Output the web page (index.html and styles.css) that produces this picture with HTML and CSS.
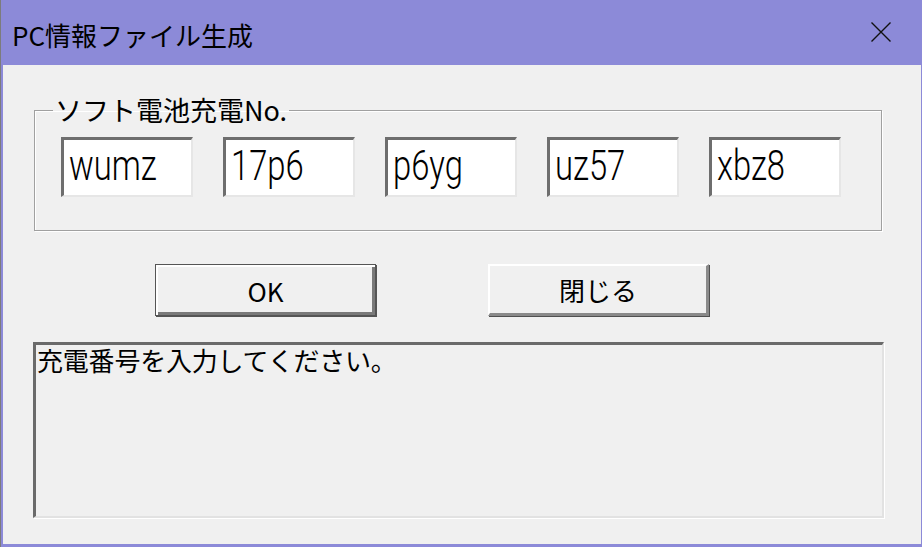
FILE: index.html
```html
<!DOCTYPE html>
<html lang="ja">
<head>
    <meta charset="UTF-8">
    <title>PC情報ファイル生成</title>
    <link rel="stylesheet" href="styles.css">
</head>
<body>
    <div class="window">
        <!-- Title bar -->
        <div class="titlebar">
            <span class="title">PC情報ファイル生成</span>
            <span class="close">
                <svg width="20" height="20" viewBox="0 0 20 20">
                    <path d="M0.5 0.5 L19.5 19.5 M19.5 0.5 L0.5 19.5" stroke="#111" stroke-width="1.4" fill="none"/>
                </svg>
            </span>
        </div>

        <!-- Dialog body -->
        <div class="client">
            <fieldset class="group">
                <legend>ソフト電池充電No.</legend>
                <div class="codes">
                    <div class="code"><span>wumz</span></div>
                    <div class="code"><span>17p6</span></div>
                    <div class="code"><span>p6yg</span></div>
                    <div class="code"><span>uz57</span></div>
                    <div class="code"><span>xbz8</span></div>
                </div>
            </fieldset>

            <div class="actions">
                <div class="btn btn-default">OK</div>
                <div class="btn">閉じる</div>
            </div>

            <div class="message">充電番号を入力してください。</div>
        </div>
    </div>
</body>
</html>
```

FILE: styles.css
```css
* {
    margin: 0;
    padding: 0;
    box-sizing: border-box;
}

body {
    background: #7c7c7c;
    font-family: "Noto Sans CJK JP", sans-serif;
    color: #000;
    height: 547px;
    overflow: hidden;
    padding-left: 1px;
}

.window {
    width: 921px;
    height: 547px;
    background: #f0f0f0;
    border-left: 2px solid #8c8ad8;
    border-right: 1px solid #8c8ad8;
    border-bottom: 3px solid #8c8ad8;
    display: flex;
    flex-direction: column;
}

/* Title bar */
.titlebar {
    height: 65px;
    flex-shrink: 0;
    background: #8c8ad8;
    display: flex;
    align-items: center;
    justify-content: space-between;
    padding: 0 30px 0 9px;
}

.title {
    font-size: 26px;
    line-height: 30px;
    margin-top: 4px;
}

.close {
    display: flex;
    width: 20px;
    height: 20px;
    margin-top: -1px;
}

/* Client area */
.client {
    flex: 1;
    padding: 30px 0 0 31px;
}

.group {
    width: 848px;
    border: 1px solid #a0a0a0;
    box-shadow: inset 1px 1px 0 #fff, 1px 1px 0 #fff;
    padding: 12px 0 33px 26px;
}

.group legend {
    font-size: 27px;
    line-height: 30px;
    margin-left: -8px;
    padding: 0 2px;
}

.codes {
    display: flex;
    gap: 30px;
}

.code {
    width: 132px;
    height: 60px;
    background: #fff;
    border-top: 3px solid #6e6e6e;
    border-left: 3px solid #6e6e6e;
    border-right: 2px solid #e6e6e6;
    border-bottom: 2px solid #e6e6e6;
    font-family: Roboto, "Liberation Sans", sans-serif;
    font-weight: 300;
    font-size: 42px;
    line-height: 52px;
    padding-left: 5px;
    overflow: hidden;
}

/* narrow, tall glyphs like the dialog's bitmap font */
.code span {
    display: inline-block;
    transform: scaleX(0.78);
    transform-origin: left center;
}

/* Buttons */
.actions {
    display: flex;
    gap: 112px;
    margin: 33px 0 0 121px;
}

.btn {
    width: 221px;
    height: 52px;
    display: flex;
    align-items: center;
    justify-content: center;
    font-size: 26px;
    background: #f0f0f0;
    border-top: 2px solid #fff;
    border-left: 2px solid #fff;
    border-right: 3px solid #8a8a8a;
    border-bottom: 3px solid #8a8a8a;
    box-shadow: 1px 1px 0 #505050;
}

.btn-default {
    border: 1px solid #555;
    box-shadow: inset 2px 2px 0 #fff, inset -3px -3px 0 #7a7a7a, 1px 1px 0 #555;
}

/* Message box */
.message {
    width: 851px;
    height: 176px;
    margin: 26px 0 0 -1px;
    background: #f0f0f0;
    border-top: 3px solid #6a6a6a;
    border-left: 3px solid #6a6a6a;
    border-right: 2px solid #e2e2e2;
    border-bottom: 2px solid #e2e2e2;
    box-shadow: 1px 1px 0 #fff;
    font-size: 26px;
    line-height: 30px;
    padding: 0 0 0 1px;
    letter-spacing: -0.2px;
}
```
